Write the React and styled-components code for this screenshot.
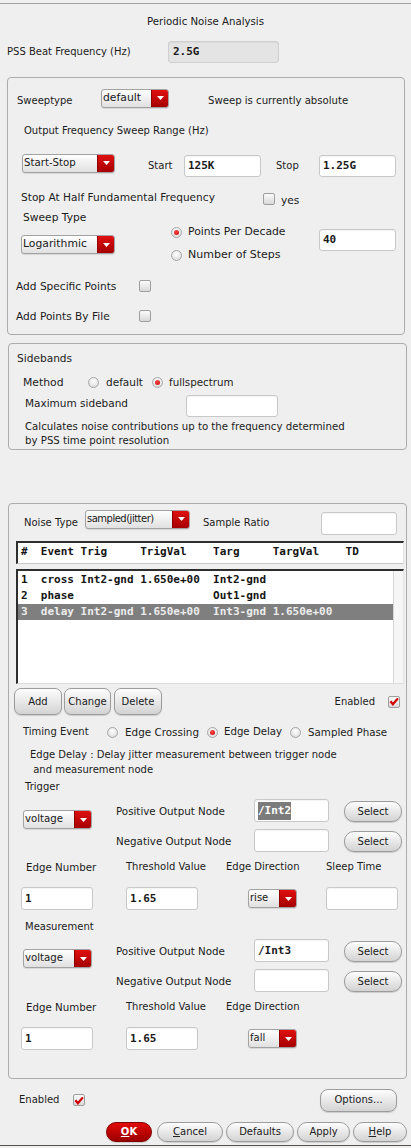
import React from "react";
import styled, { createGlobalStyle } from "styled-components";

const SANS = `"DejaVu Sans", "Liberation Sans", sans-serif`;
const MONO = `"DejaVu Sans Mono", "Liberation Mono", monospace`;

const GlobalStyle = createGlobalStyle`
  html, body { margin: 0; padding: 0; background: #efefef; }
  body { font-family: ${SANS}; font-size: 10px; color: #1c1c1c; }
`;

// shifts an item's centre inside a centred flex row
const shift = (p) =>
  p.$dy > 0 ? `margin-top:${2 * p.$dy}px;` : p.$dy < 0 ? `margin-bottom:${-2 * p.$dy}px;` : "";
const ml = (p) => (typeof p.$ml === "string" ? p.$ml : `${p.$ml || 0}px`);

const Window = styled.div`
  box-sizing: border-box;
  width: 411px;
  height: 1143px;
  margin-top: 3px;
  border-top: 1px solid #a4a4a4;
  border-bottom: 1px solid #5b5248;
  background: #efefef;
  display: flex;
  flex-direction: column;
`;

const Title = styled.div`
  box-sizing: border-box;
  height: 34px;
  flex-shrink: 0;
  display: flex;
  align-items: center;
  justify-content: center;
  padding-top: 2px;
  font: 10.2px/12px ${SANS};
  color: #202020;
`;

const Row = styled.div`
  display: flex;
  align-items: center;
  flex-shrink: 0;
  height: ${(p) => p.$h}px;
  margin-top: ${(p) => p.$mt || 0}px;
  padding-left: ${(p) => p.$pl || 0}px;
  padding-right: ${(p) => p.$pr || 0}px;
  justify-content: ${(p) => (p.$end ? "flex-end" : "flex-start")};
`;

const Label = styled.span`
  font: ${(p) => p.$fs || 10}px/12px ${SANS};
  white-space: nowrap;
  flex-shrink: 0;
  ${(p) => (p.$w ? `width:${p.$w}px;` : "")}
  margin-left: ${ml};
  ${shift}
`;

const Panel = styled.section`
  box-sizing: border-box;
  flex-shrink: 0;
  margin-top: ${(p) => p.$mt}px;
  margin-left: ${(p) => p.$x}px;
  width: ${(p) => p.$w}px;
  height: ${(p) => p.$h}px;
  border: 1px solid #acacac;
  border-radius: 4px;
  display: flex;
  flex-direction: column;
`;

const Field = styled.div`
  box-sizing: border-box;
  flex-shrink: 0;
  width: ${(p) => p.$w}px;
  height: ${(p) => p.$h || 22}px;
  margin-left: ${ml};
  ${shift}
  background: ${(p) => (p.$disabled ? "#e4e4e4" : "#ffffff")};
  border: 1px solid ${(p) => (p.$disabled ? "#cfcfcf" : "#c8c8c8")};
  border-radius: 3px;
  box-shadow: inset 0 1px 1px rgba(0, 0, 0, 0.05);
  display: flex;
  align-items: center;
  padding-left: ${(p) => (p.$disabled ? 4 : 3)}px;
  font: bold 11px/14px ${MONO};
  color: #1a1a1a;
  white-space: pre;
`;

const Selected = styled.span`
  background: #7b7b7b;
  color: #ffffff;
  line-height: 18px;
`;

const ComboBox = styled.div`
  box-sizing: border-box;
  flex-shrink: 0;
  display: flex;
  width: ${(p) => p.$w}px;
  height: 19px;
  margin-left: ${ml};
  ${shift}
  border: 1px solid #a2a2a2;
  border-radius: 3px;
  overflow: hidden;
  background: linear-gradient(#ffffff, #e0e0e0);
  box-shadow: 0 1px 1px rgba(0, 0, 0, 0.1);
`;

const ComboText = styled.span`
  flex: 1;
  padding-left: 1px;
  font: ${(p) => p.$fs || 10}px/16px ${SANS};
  letter-spacing: ${(p) => (p.$tight ? "-0.5px" : "0")};
  white-space: nowrap;
  overflow: hidden;
  color: #1a1a1a;
`;

const ComboArrow = styled.span`
  width: 16px;
  background: linear-gradient(#e01010, #a50000);
  border-left: 1px solid #8c0000;
  display: flex;
  align-items: center;
  justify-content: center;
`;

const Combo = ({ w, value, dy, ml: left, tight, fs }) => (
  <ComboBox $w={w} $dy={dy} $ml={left}>
    <ComboText $tight={tight} $fs={fs}>
      {value}
    </ComboText>
    <ComboArrow>
      <svg width="7" height="4" viewBox="0 0 7 4">
        <path d="M0 0h7L3.5 4z" fill="#ffffff" />
      </svg>
    </ComboArrow>
  </ComboBox>
);

const CheckBox = styled.span`
  box-sizing: border-box;
  flex-shrink: 0;
  width: 12px;
  height: 12px;
  margin-left: ${ml};
  ${shift}
  border: 1px solid #9e9e9e;
  border-radius: 2px;
  background: linear-gradient(#fbfbfb, #d9d9d9);
  display: flex;
  align-items: center;
  justify-content: center;
`;

const Check = ({ on, ml: left, dy }) => (
  <CheckBox $ml={left} $dy={dy}>
    {on && (
      <svg width="10" height="9" viewBox="0 0 10 9">
        <path d="M1.4 4.2L3.9 7.2L8.9 1.4" fill="none" stroke="#d20000" strokeWidth="2.2" />
      </svg>
    )}
  </CheckBox>
);

const RadioDot = styled.span`
  box-sizing: border-box;
  flex-shrink: 0;
  width: 11px;
  height: 11px;
  border-radius: 50%;
  border: 1px solid #a6a6a6;
  background: radial-gradient(circle at 50% 35%, #ffffff, #d6d6d6);
  display: flex;
  align-items: center;
  justify-content: center;
  &::after {
    content: "";
    display: ${(p) => (p.$on ? "block" : "none")};
    width: 5px;
    height: 5px;
    border-radius: 50%;
    background: radial-gradient(circle at 40% 35%, #ff4a4a, #c00000);
  }
`;

const RadioOption = styled.label`
  display: flex;
  align-items: center;
  flex-shrink: 0;
  height: 14px;
  ${(p) => (p.$w ? `width:${p.$w}px;` : "")}
  span + span {
    margin-left: ${(p) => p.$gap || 7}px;
  }
`;

const Radio = ({ on, children, w, gap, fs }) => (
  <RadioOption $w={w} $gap={gap}>
    <RadioDot $on={on} />
    <Label as="span" $fs={fs}>
      {children}
    </Label>
  </RadioOption>
);

const RadioStack = styled.div`
  display: flex;
  flex-direction: column;
  gap: 9px;
  width: ${(p) => p.$w}px;
  margin-left: ${ml};
  ${shift}
`;

const Button = styled.button`
  box-sizing: border-box;
  flex-shrink: 0;
  width: ${(p) => p.$w}px;
  height: ${(p) => p.$h || 20}px;
  margin-left: ${ml};
  padding: 0;
  border: 1px solid ${(p) => (p.$primary ? "#7e0000" : "#9c9c9c")};
  border-radius: ${(p) => p.$r || 10}px;
  background: ${(p) =>
    p.$primary ? "linear-gradient(#e20a0a, #9c0000)" : "linear-gradient(#fdfdfd, #d3d3d3)"};
  box-shadow: 0 1px 1px rgba(0, 0, 0, 0.15);
  font: ${(p) => (p.$primary ? "bold" : "normal")} 10px/12px ${SANS};
  color: ${(p) => (p.$primary ? "#ffffff" : "#202020")};
  white-space: nowrap;
`;

const Para = styled.p`
  margin: ${(p) => p.$mt}px 0 0;
  padding-left: ${(p) => p.$pl}px;
  font: ${(p) => p.$fs || 10}px/${(p) => p.$lh}px ${SANS};
  white-space: pre;
  flex-shrink: 0;
`;

const TableHead = styled.div`
  box-sizing: border-box;
  flex-shrink: 0;
  margin: 6px 0 0 7px;
  width: 388px;
  height: 23px;
  background: #ffffff;
  border-top: 2px solid #2e2e2e;
  border-left: 2px solid #2e2e2e;
  border-right: 1px solid #e4e4e4;
  border-bottom: 1px solid #c9c9c9;
  display: flex;
  align-items: center;
  padding: 0 0 2px 3px;
  font: bold 11px/14px ${MONO};
  white-space: pre;
  color: #141414;
`;

const ListBox = styled.div`
  box-sizing: border-box;
  flex-shrink: 0;
  margin: 5px 0 0 7px;
  width: 388px;
  height: 115px;
  border-top: 2px solid #2e2e2e;
  border-left: 2px solid #2e2e2e;
  border-right: 1px solid #e4e4e4;
  border-bottom: 1px solid #dcdcdc;
  display: flex;
`;

const ListRows = styled.div`
  flex: 1;
  background: #ffffff;
  padding-top: 1px;
`;

const ListGutter = styled.div`
  width: 9px;
  background: #f6f6f6;
  border-left: 1px solid #d6d6d6;
`;

const ListRow = styled.div`
  height: 16px;
  display: flex;
  align-items: center;
  padding-left: 3px;
  font: bold 11px/14px ${MONO};
  white-space: pre;
  background: ${(p) => (p.$sel ? "#7f7f7f" : "transparent")};
  color: ${(p) => (p.$sel ? "#ececec" : "#141414")};
`;

const NodeGrid = styled.div`
  display: grid;
  flex-shrink: 0;
  grid-template-columns: 93px 138px 75px 15px 58px;
  grid-template-rows: 23px 23px;
  row-gap: 7px;
  margin-top: 3px;
  padding-left: 14px;
  align-items: center;
`;

const KindCell = styled.div`
  grid-column: 1;
  grid-row: 1 / span 2;
  align-self: start;
  margin-top: ${(p) => p.$t}px;
`;

const NodeLabel = styled(Label)`
  grid-column: 2;
  grid-row: ${(p) => p.$row};
`;

const NodeField = styled(Field)`
  grid-column: 3;
  grid-row: ${(p) => p.$row};
`;

const NodeButton = styled(Button)`
  grid-column: 5;
  grid-row: ${(p) => p.$row};
  align-self: end;
`;

const COLS = [0, 3, 9, 18, 29, 38, 49];
const line = (cells) =>
  cells.map((c, i) => (i < cells.length - 1 ? c.padEnd(COLS[i + 1] - COLS[i]) : c)).join("").trimEnd();

const HEAD = ["#", "Event", "Trig", "TrigVal", "Targ", "TargVal", "TD"];
const EVENTS = [
  ["1", "cross", "Int2-gnd", "1.650e+00", "Int2-gnd", "", ""],
  ["2", "phase", "", "", "Out1-gnd", "", ""],
  ["3", "delay", "Int2-gnd", "1.650e+00", "Int3-gnd", "1.650e+00", ""],
];

const NodeBlock = ({ pos, selected, kindTop }) => (
  <NodeGrid>
    <KindCell $t={kindTop}>
      <Combo w={69} value="voltage" fs={10.2} />
    </KindCell>
    <NodeLabel $row={1} $fs={10.3}>Positive Output Node</NodeLabel>
    <NodeField $row={1} $w={75} $h={23}>
      {selected ? <Selected>{pos}</Selected> : pos}
    </NodeField>
    <NodeButton $row={1} $w={58} $h={21}>
      Select
    </NodeButton>
    <NodeLabel $row={2} $fs={10.3}>Negative Output Node</NodeLabel>
    <NodeField $row={2} $w={75} $h={23} />
    <NodeButton $row={2} $w={58} $h={21}>
      Select
    </NodeButton>
  </NodeGrid>
);

const EdgeBlock = ({ dir, sleep }) => (
  <>
    <Row $mt={6} $h={18} $pl={17}>
      <Label $w={100} $fs={10.25}>Edge Number</Label>
      <Label $w={100}>Threshold Value</Label>
      <Label $w={100}>Edge Direction</Label>
      {sleep && <Label>Sleep Time</Label>}
    </Row>
    <Row $mt={11} $h={23} $pl={12}>
      <Field $w={72} $h={23}>1</Field>
      <Field $w={72} $h={23} $ml={33}>1.65</Field>
      <Combo w={49} ml={50} value={dir} />
      {sleep && <Field $w={72} $h={23} $ml={29} />}
    </Row>
  </>
);

export default function App() {
  return (
    <>
      <GlobalStyle />
      <Window>
        <Title>Periodic Noise Analysis</Title>
        <Row $h={28} $pl={7}>
          <Label $w={161}>PSS Beat Frequency (Hz)</Label>
          <Field $w={111} $h={22} $disabled>2.5G</Field>
        </Row>

        <Panel $mt={11} $x={7} $w={398} $h={258}>
          <Row $mt={8} $h={24} $pl={9}>
            <Label $w={84} $dy={3}>Sweeptype</Label>
            <Combo w={68} value="default" fs={10.8} />
            <Label $ml={39} $dy={3} $fs={10.15}>Sweep is currently absolute</Label>
          </Row>
          <Row $mt={11} $h={20} $pl={16}>
            <Label>Output Frequency Sweep Range (Hz)</Label>
          </Row>
          <Row $mt={11} $h={28} $pl={14}>
            <Combo w={93} dy={-3} value="Start-Stop" fs={10.2} />
            <Label $ml={33} $w={36}>Start</Label>
            <Field $w={77}>125K</Field>
            <Label $ml={15} $w={43}>Stop</Label>
            <Field $w={77}>1.25G</Field>
          </Row>
          <Row $mt={9} $h={20} $pl={13}>
            <Label $w={242} $dy={-2} $fs={10.6}>Stop At Half Fundamental Frequency</Label>
            <Check />
            <Label $ml={6} $dy={1} $fs={10.6}>yes</Label>
          </Row>
          <Row $h={18} $pl={15}>
            <Label $fs={10.7}>Sweep Type</Label>
          </Row>
          <Row $h={35} $pl={13}>
            <Combo w={94} value="Logarithmic" fs={10.8} />
            <RadioStack $ml={56} $w={148} $dy={-1}>
              <Radio on gap={6} fs={10.8}>Points Per Decade</Radio>
              <Radio gap={6} fs={11}>Number of Steps</Radio>
            </RadioStack>
            <Field $w={77} $dy={-5}>40</Field>
          </Row>
          <Row $mt={14} $h={20} $pl={8}>
            <Label $w={123} $fs={10.6}>Add Specific Points</Label>
            <Check />
          </Row>
          <Row $mt={10} $h={20} $pl={8}>
            <Label $w={123} $fs={10.6}>Add Points By File</Label>
            <Check />
          </Row>
        </Panel>

        <Panel $mt={8} $x={8} $w={399} $h={107}>
          <Row $mt={4} $h={20} $pl={8}>
            <Label $fs={10.6}>Sidebands</Label>
          </Row>
          <Row $mt={4} $h={20} $pl={14}>
            <Label $w={65} $dy={1} $fs={10.8}>Method</Label>
            <Radio w={64} fs={10.5}>default</Radio>
            <Radio on gap={6} fs={10.3}>fullspectrum</Radio>
          </Row>
          <Row $mt={3} $h={22} $pl={16}>
            <Label $w={161} $dy={-3} $fs={10.5}>Maximum sideband</Label>
            <Field $w={92} />
          </Row>
          <Para $mt={3} $pl={16} $lh={13.5} $fs={10.2}>
            Calculates noise contributions up to the frequency determined
            <br />
            by PSS time point resolution
          </Para>
        </Panel>

        <Panel $mt={53} $x={8} $w={399} $h={576}>
          <Row $mt={7} $h={24} $pl={15}>
            <Label $w={61}>Noise Type</Label>
            <Combo w={105} dy={-4} value="sampled(jitter)" tight />
            <Label $ml={13} $w={118}>Sample Ratio</Label>
            <Field $w={76} $h={23} />
          </Row>
          <TableHead>{line(HEAD)}</TableHead>
          <ListBox>
            <ListRows>
              {EVENTS.map((ev, i) => (
                <ListRow key={ev[0]} $sel={i === 2}>
                  {line(ev)}
                </ListRow>
              ))}
            </ListRows>
            <ListGutter />
          </ListBox>
          <Row $mt={4} $h={27} $pl={5} $pr={6}>
            <Button $w={48} $h={27} $r={7}>Add</Button>
            <Button $w={47} $h={27} $r={7} $ml={2}>Change</Button>
            <Button $w={48} $h={27} $r={7} $ml={3}>Delete</Button>
            <Label $ml="auto">Enabled</Label>
            <Check on ml={13} />
          </Row>
          <Row $mt={7} $h={20} $pl={14}>
            <Label $w={84}>Timing Event</Label>
            <Radio w={100} fs={10.4}>Edge Crossing</Radio>
            <Radio on w={83} gap={6} fs={10.2}>Edge Delay</Radio>
            <Radio fs={10.3}>Sampled Phase</Radio>
          </Row>
          <Para $mt={5} $pl={21} $lh={15}>
            {"Edge Delay : Delay jitter measurement between trigger node\n and measurement node"}
          </Para>
          <Row $mt={1} $h={18} $pl={16}>
            <Label>Trigger</Label>
          </Row>
          <NodeBlock pos="/Int2" selected kindTop={11} />
          <EdgeBlock dir="rise" sleep />
          <Row $mt={8} $h={18} $pl={16}>
            <Label>Measurement</Label>
          </Row>
          <NodeBlock pos="/Int3" kindTop={10} />
          <EdgeBlock dir="fall" />
        </Panel>

        <Row $mt={9} $h={24} $pl={19} $pr={14}>
          <Label $w={54}>Enabled</Label>
          <Check on />
          <Button $ml="auto" $w={77} $h={23} $r={8}>Options...</Button>
        </Row>
        <Row $mt={10} $h={20} $pr={4} $end>
          <Button $primary $w={46}>
            <u>O</u>K
          </Button>
          <Button $w={66} $ml={5}>
            <u>C</u>ancel
          </Button>
          <Button $w={68} $ml={3}>Defaults</Button>
          <Button $w={53} $ml={3}>Apply</Button>
          <Button $w={54} $ml={3}>
            <u>H</u>elp
          </Button>
        </Row>
      </Window>
    </>
  );
}
